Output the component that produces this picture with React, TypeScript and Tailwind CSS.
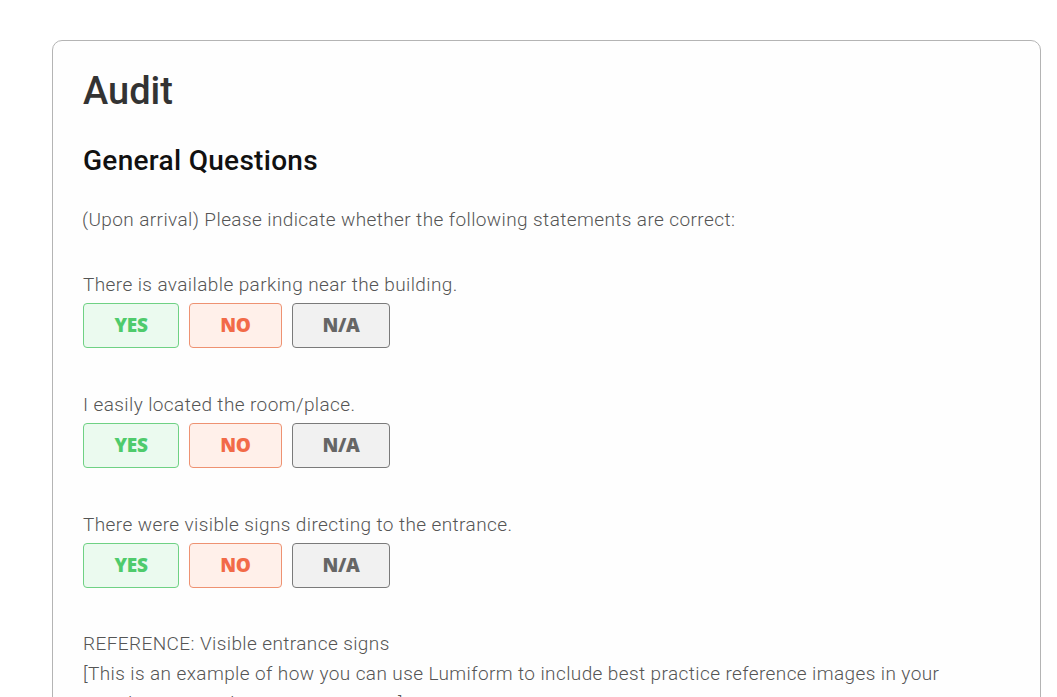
import React from "react";

const questions = [
  "There is available parking near the building.",
  "I easily located the room/place.",
  "There were visible signs directing to the entrance.",
];

function Choices() {
  return (
    <div className="flex gap-[10px] mt-[9px]">
      <button className="w-[96px] h-[45px] rounded-[4px] border border-[#6fd184] bg-[#ebfaef] text-[#4fcb6c] font-extrabold text-[19px] leading-none tracking-[-0.3px] [font-family:'Open_Sans',sans-serif]">
        YES
      </button>
      <button className="w-[93px] h-[45px] rounded-[4px] border border-[#ee9272] bg-[#fff0ea] text-[#f26a48] font-extrabold text-[19px] leading-none tracking-[-0.3px] [font-family:'Open_Sans',sans-serif]">
        NO
      </button>
      <button className="w-[98px] h-[45px] rounded-[4px] border border-[#7a7a7a] bg-[#f1f1f1] text-[#666666] font-extrabold text-[19px] leading-none tracking-[-0.3px] [font-family:'Open_Sans',sans-serif]">
        N/A
      </button>
    </div>
  );
}

export default function App() {
  return (
    <div className="h-[697px] overflow-hidden bg-white [font-family:Roboto,'Noto_Sans',sans-serif]">
      <div className="pt-[40px] pl-[52px] pr-[16px]">
        <div className="w-[989px] h-[700px] rounded-[10px] border border-[#b4b4b4] bg-[#fefefe] pl-[30px] pt-[31px]">
          <h1 className="text-[38px] leading-none font-medium text-[#333333]">Audit</h1>
          <h2 className="mt-[37px] text-[28px] leading-none font-medium tracking-[0.3px] text-[#111111]">
            General Questions
          </h2>
          <p className="mt-[35px] -ml-[1px] text-[19px] leading-none font-light tracking-[0.4px] text-[#555555]">
            (Upon arrival) Please indicate whether the following statements are correct:
          </p>
          <div className="mt-[46px] flex flex-col gap-[47px] text-[19px] leading-none font-light tracking-[0.4px] text-[#555555]">
            {questions.map((q) => (
              <div key={q}>
                <p>{q}</p>
                <Choices />
              </div>
            ))}
          </div>
          <div className="mt-[41px] text-[19px] leading-[30px] font-light tracking-[0.4px] text-[#555555] max-w-[860px]">
            <p>REFERENCE: Visible entrance signs</p>
            <p>
              [This is an example of how you can use Lumiform to include best practice reference images in your
              templates to guide your inspections.]
            </p>
          </div>
        </div>
      </div>
    </div>
  );
}
